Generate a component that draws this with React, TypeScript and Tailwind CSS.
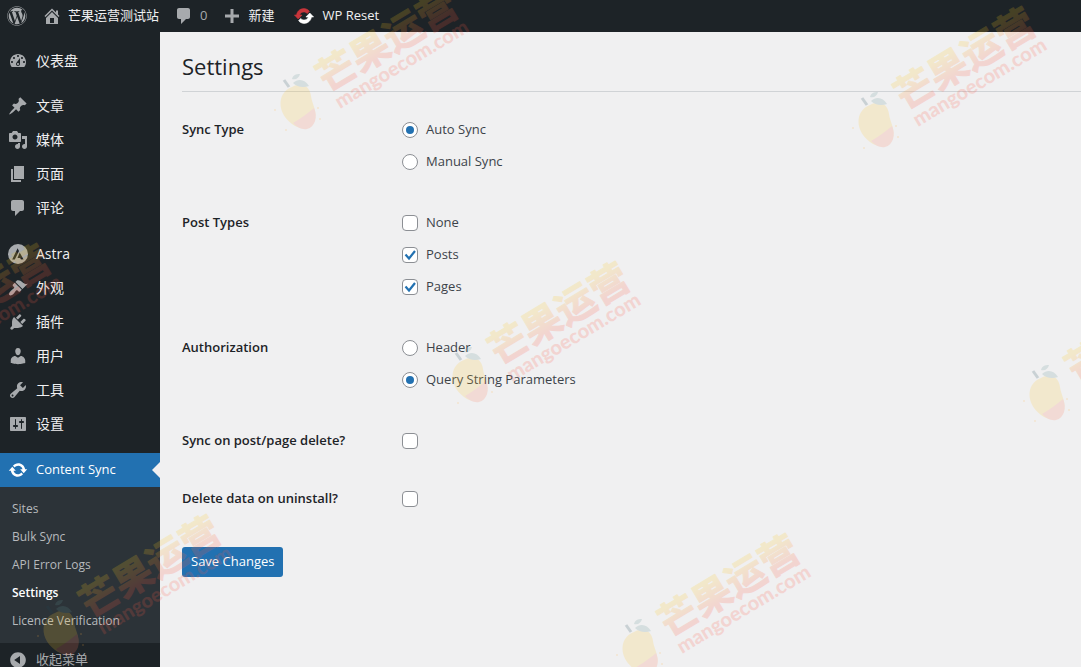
import { ReactNode } from 'react';
import { FaWordpress } from 'react-icons/fa';

const icons = {
  home: 'M16 8.5l1.53 1.53-1.06 1.06L10 4.6l-6.47 6.49-1.06-1.06L10 2.5l4 4v-2h2v4zm-6-2.46l6 5.99V18H4v-5.97zM12 17v-5H8v5h4z',
  plus: 'M17 8.5v3h-5.5V17h-3v-5.5H3v-3h5.5V3h3v5.5z',
  dashboard:
    'M3.76 16h12.48c1.1-1.37 1.76-3.11 1.76-5 0-4.42-3.58-8-8-8s-8 3.58-8 8c0 1.89.66 3.63 1.76 5zM10 4c.55 0 1 .45 1 1s-.45 1-1 1-1-.45-1-1 .45-1 1-1zM6 6c.55 0 1 .45 1 1s-.45 1-1 1-1-.45-1-1 .45-1 1-1zm8 0c.55 0 1 .45 1 1s-.45 1-1 1-1-.45-1-1 .45-1 1-1zm-5.37 5.55L12 7v6c0 1.1-.9 2-2 2s-2-.9-2-2c0-.57.24-1.08.63-1.45zM4 10c.55 0 1 .45 1 1s-.45 1-1 1-1-.45-1-1 .45-1 1-1zm12 0c.55 0 1 .45 1 1s-.45 1-1 1-1-.45-1-1 .45-1 1-1zm-5 3c0-.55-.45-1-1-1s-1 .45-1 1 .45 1 1 1 1-.45 1-1z',
  post: 'M10.44 3.02l1.82-1.82 6.36 6.35-1.83 1.82c-1.05-.68-2.48-.57-3.41.36l-.75.75c-.92.93-1.04 2.35-.35 3.41l-1.83 1.82-2.41-2.41-2.8 2.79c-.42.42-3.38 2.71-3.8 2.29s1.86-3.39 2.28-3.81l2.79-2.79L4.1 9.36l1.83-1.82c1.05.69 2.48.57 3.4-.36l.75-.75c.93-.92 1.05-2.35.36-3.41z',
  media:
    'M13 11V4c0-.55-.45-1-1-1h-1.67L9 1H5L3.67 3H2c-.55 0-1 .45-1 1v7c0 .55.45 1 1 1h10c.55 0 1-.45 1-1zM7 4.5c1.38 0 2.5 1.12 2.5 2.5S8.38 9.5 7 9.5 4.5 8.38 4.5 7 5.62 4.5 7 4.5zM14 6h5v10.5c0 1.38-1.12 2.5-2.5 2.5S14 17.88 14 16.5s1.12-2.5 2.5-2.5c.17 0 .34.02.5.05V9h-3V6zm-4 8.05V13h2v3.5c0 1.38-1.12 2.5-2.5 2.5S7 17.88 7 16.5 8.12 14 9.5 14c.17 0 .34.02.5.05z',
  page: 'M6 15V2h10v13H6zm-1 1h8v2H3V5h2v11z',
  comment: 'M5 2h9c1.1 0 2 .9 2 2v7c0 1.1-.9 2-2 2h-2l-5 5v-5H5c-1.1 0-2-.9-2-2V4c0-1.1.9-2 2-2z',
  appearance:
    'M14.48 11.06L7.41 3.99l1.5-1.5c.5-.56 2.3-.47 3.51.32 1.21.8 1.43 1.28 2.91 2.1 1.18.64 2.45 1.26 4.45.85zm-.71.71L6.7 4.7 4.93 6.47c-.39.39-.39 1.02 0 1.41l1.06 1.06c.39.39.39 1.03 0 1.42-.6.6-1.43 1.11-2.21 1.69-.35.26-.7.53-1.01.84C1.43 14.23.4 16.08 1.4 17.07c.99 1 2.84-.03 4.18-1.36.31-.31.58-.66.85-1.02.57-.78 1.08-1.61 1.69-2.21.39-.39 1.02-.39 1.41 0l1.06 1.06c.39.39 1.02.39 1.41 0z',
  plugins:
    'M13.11 4.36L9.87 7.6 8 5.73l3.24-3.24c.35-.34 1.05-.2 1.56.32.52.51.66 1.21.31 1.55zm-8 1.77l.91-1.12 9.01 9.01-1.19.84c-.71.71-2.63 1.16-3.82 1.16H6.14L4.9 17.26c-.59.59-1.54.59-2.12 0-.59-.58-.59-1.53 0-2.12l1.24-1.24v-3.88c0-1.13.4-3.19 1.09-3.89zm7.26 3.97l3.24-3.24c.34-.35 1.04-.21 1.55.31.52.51.66 1.21.31 1.55l-3.24 3.25z',
  users:
    'M10 9.25c-2.27 0-2.73-3.44-2.73-3.44C7 4.02 7.82 2 9.97 2c2.16 0 2.98 2.02 2.71 3.81 0 0-.41 3.44-2.68 3.44zm0 2.57L12.72 10c2.39 0 4.52 2.33 4.52 4.53v2.49s-3.65 1.13-7.24 1.13c-3.65 0-7.24-1.13-7.24-1.13v-2.49c0-2.25 1.94-4.48 4.47-4.48z',
  tools:
    'M16.68 9.77c-1.34 1.34-3.3 1.67-4.95.99l-5.41 6.52c-.99.99-2.59.99-3.58 0s-.99-2.59 0-3.57l6.52-5.42c-.68-1.65-.35-3.61.99-4.95 1.28-1.28 3.12-1.62 4.72-1.06l-2.89 2.89 2.82 2.82 2.86-2.87c.53 1.58.18 3.39-1.08 4.65zM3.81 16.21c.4.39 1.04.39 1.43 0 .4-.4.4-1.04 0-1.43-.39-.4-1.03-.4-1.43 0-.39.39-.39 1.03 0 1.43z',
  settings:
    'M18 16V4c0-.55-.45-1-1-1H3c-.55 0-1 .45-1 1v12c0 .55.45 1 1 1h14c.55 0 1-.45 1-1zM8 11h1c.55 0 1 .45 1 1s-.45 1-1 1H8v1.5c0 .28-.22.5-.5.5s-.5-.22-.5-.5V13H6c-.55 0-1-.45-1-1s.45-1 1-1h1V5.5c0-.28.22-.5.5-.5s.5.22.5.5V11zm5-2h-1c-.55 0-1-.45-1-1s.45-1 1-1h1V5.5c0-.28.22-.5.5-.5s.5.22.5.5V7h1c.55 0 1 .45 1 1s-.45 1-1 1h-1v5.5c0 .28-.22.5-.5.5s-.5-.22-.5-.5V9z',
  sync: 'M10.2 3.28c3.53 0 6.43 2.61 6.92 6h2.08l-3.5 4-3.5-4h2.32c-.45-1.97-2.21-3.45-4.32-3.45-1.45 0-2.73.71-3.54 1.78L4.95 5.66C6.23 4.2 8.11 3.28 10.2 3.28zm-.4 13.44c-3.52 0-6.43-2.61-6.92-6H.8l3.5-4c1.17 1.33 2.33 2.67 3.5 4H5.48c.45 1.97 2.21 3.45 4.32 3.45 1.45 0 2.73-.71 3.54-1.78l1.71 1.95c-1.28 1.46-3.15 2.38-5.25 2.38z',
  astra: 'M10 0a10 10 0 1 0 0 20 10 10 0 0 0 0-20zM9.6 4.2L11 7l-4.2 8.6H4.2zM11.7 8.5l3.9 7.1h-2.7l-.8-1.7H9.5z',
  collapse:
    'M10 2.16c4.33 0 7.84 3.51 7.84 7.84s-3.51 7.84-7.84 7.84S2.16 14.33 2.16 10 5.71 2.16 10 2.16zm2 11.72V6.12L6.18 9.97z',
};

type IconName = keyof typeof icons;

function Icon({ name }: { name: IconName }) {
  return (
    <svg viewBox="0 0 20 20" className="size-5 shrink-0" fill="currentColor" fillRule="evenodd" aria-hidden="true">
      <path d={icons[name]} />
    </svg>
  );
}

function ResetIcon() {
  return (
    <svg viewBox="0 0 20 20" className="size-5 shrink-0 -scale-x-100" strokeWidth="0.6" aria-hidden="true">
      <path
        fill="#c8353b"
        stroke="#c8353b"
        d="M10.2 2.6c3.8 0 6.8 2.9 7.2 6.4h2.2l-3.8 4-3.9-4h2.4c-.5-1.8-2.1-3-4.1-3-1.4 0-2.6.6-3.5 1.6L4.6 5.3C6 3.6 8 2.6 10.2 2.6z"
      />
      <path
        fill="#fff"
        stroke="#fff"
        d="M9.8 17.4c-3.8 0-6.8-2.9-7.2-6.4H.4l3.8-4 3.9 4H5.7c.5 1.8 2.1 3 4.1 3 1.4 0 2.6-.6 3.5-1.6l2.1 2.3c-1.4 1.7-3.4 2.7-5.6 2.7z"
      />
    </svg>
  );
}

const menuGroups: { icon: IconName; label: string }[][] = [
  [{ icon: 'dashboard', label: '仪表盘' }],
  [
    { icon: 'post', label: '文章' },
    { icon: 'media', label: '媒体' },
    { icon: 'page', label: '页面' },
    { icon: 'comment', label: '评论' },
  ],
  [
    { icon: 'astra', label: 'Astra' },
    { icon: 'appearance', label: '外观' },
    { icon: 'plugins', label: '插件' },
    { icon: 'users', label: '用户' },
    { icon: 'tools', label: '工具' },
    { icon: 'settings', label: '设置' },
  ],
];

const submenu = ['Sites', 'Bulk Sync', 'API Error Logs', 'Settings', 'Licence Verification'];

function AdminBar() {
  return (
    <header className="flex h-8 shrink-0 items-center bg-[#1d2327] text-[13px] text-[#f0f0f1]">
      <a href="#" aria-label="WordPress" className="pl-[7px] text-[#a7aaad]">
        <FaWordpress className="size-5" />
      </a>
      <a href="#" className="flex items-center gap-1.5 pl-[15px]">
        <span className="text-[#a7aaad]">
          <Icon name="home" />
        </span>
        芒果运营测试站
      </a>
      <a href="#" className="flex items-center gap-1.5 pl-[15px] text-[#a7aaad]">
        <Icon name="comment" />
        <span>0</span>
      </a>
      <a href="#" className="flex items-center gap-1.5 pl-[15px]">
        <span className="text-[#a7aaad]">
          <Icon name="plus" />
        </span>
        新建
      </a>
      <a href="#" className="flex items-center gap-2 pl-5">
        <ResetIcon />
        WP Reset
      </a>
    </header>
  );
}

function Sidebar() {
  return (
    <nav className="w-40 shrink-0 bg-[#1d2327] pt-3 text-[13px] text-[#f0f0f1]">
      {menuGroups.map((group, i) => (
        <ul key={i} className={i === 0 ? 'mb-[11px]' : 'mb-3'}>
          {group.map((item) => (
            <li key={item.label}>
              <a href="#" className="flex h-[34px] items-center gap-2 pl-2 text-sm">
                <span className="text-[#a7aaad]">
                  <Icon name={item.icon} />
                </span>
                {item.label}
              </a>
            </li>
          ))}
        </ul>
      ))}
      <a href="#" className="relative flex h-[34px] items-center gap-2 bg-[#2271b1] pl-2 text-white">
        <Icon name="sync" />
        Content Sync
        <span className="absolute right-0 border-8 border-transparent border-r-[#f0f0f1]" />
      </a>
      <ul className="bg-[#2c3338] py-2 text-xs text-[#b7babd]">
        {submenu.map((label) => (
          <li key={label}>
            <a
              href="#"
              className={
                label === 'Settings'
                  ? 'flex h-7 items-center pl-3 font-semibold text-white'
                  : 'flex h-7 items-center pl-3'
              }
            >
              {label}
            </a>
          </li>
        ))}
      </ul>
      <button className="flex h-[34px] items-center gap-2 pl-2 text-[#a7aaad]">
        <Icon name="collapse" />
        收起菜单
      </button>
    </nav>
  );
}

type OptionProps = { type: 'radio' | 'checkbox'; name: string; label?: string; id?: string; checked?: boolean };

function Option({ type, name, label, id, checked }: OptionProps) {
  return (
    <label className="flex h-8 items-center gap-2">
      <span className="relative flex size-4">
        <input
          type={type}
          name={name}
          id={id}
          defaultChecked={checked}
          className={
            type === 'radio'
              ? 'peer size-4 appearance-none rounded-full border border-[#8c8f94] bg-white'
              : 'peer size-4 appearance-none rounded border border-[#8c8f94] bg-white'
          }
        />
        {type === 'radio' ? (
          <span className="absolute inset-1 hidden rounded-full bg-[#2271b1] peer-checked:block" />
        ) : (
          <svg viewBox="0 0 16 16" className="pointer-events-none absolute inset-0 hidden peer-checked:block">
            <path d="M3.5 7.5l3.5 4L13 4" fill="none" stroke="#2271b1" strokeWidth="2.2" />
          </svg>
        )}
      </span>
      {label}
    </label>
  );
}

function Row({ title, htmlFor, children }: { title: string; htmlFor?: string; children: ReactNode }) {
  return (
    <tr className="align-top">
      <th scope="row" className="w-[220px] pt-5 text-left leading-[18px] font-semibold text-[#1d2327]">
        {htmlFor ? <label htmlFor={htmlFor}>{title}</label> : title}
      </th>
      <td className={htmlFor ? 'pt-3.5 pb-3' : 'pt-3.5 pb-[15px]'}>{children}</td>
    </tr>
  );
}

// mango origins of the repeated watermark
const marks = [
  [298, 105],
  [876, 123],
  [470, 378],
  [1047, 396],
  [640, 650],
  [61, 631],
  [-109, 360],
];

function Watermark() {
  return (
    <svg className="pointer-events-none absolute inset-0 h-full w-full" aria-hidden="true">
      <defs>
        <linearGradient id="mark" x1="0" y1="0" x2="0" y2="1">
          <stop offset="0.3" stopColor="#ffc820" />
          <stop offset="0.75" stopColor="#ff5a40" />
        </linearGradient>
      </defs>
      {marks.map(([x, y]) => (
        <g key={x} transform={`translate(${x} ${y})`} opacity="0.18">
          <path d="M-6-18C2-23 12-20 13-9c1 8 6 14 4 23-2 9-14 12-23 5-9-7-13-16-11-25 2-7 6-10 11-12z" fill="#ffc830" />
          <path d="M-5 18C5 12 14 5 16 3c4 9 1 19-7 21-5 1-10-2-14-6z" fill="#ff7a5a" />
          <path d="M-5-22c5-5 12-4 16 3-6 2-12 1-16-3zM-6-26c1-4 4-5 8-5-1 4-4 6-8 5z" fill="#5f9090" />
          <path d="M-14-25l5 7" stroke="#204858" strokeWidth="3" />
          <g fill="#ffb040">
            <circle cx="-23" cy="5" r="1" />
            <circle cx="-12" cy="25" r="1" />
            <circle cx="20" cy="3" r="1" />
            <circle cx="22" cy="14" r="1" />
          </g>
          <g transform="rotate(-31)">
            <text
              x="31"
              y="5"
              fontSize="39"
              fontWeight="700"
              fill="url(#mark)"
              stroke="url(#mark)"
              strokeLinejoin="round"
              className="font-['Noto_Sans_CJK_SC',sans-serif]"
            >
              芒果运营
            </text>
            <text
              x="34"
              y="25"
              fontSize="20"
              fontWeight="900"
              fill="#ff5a48"
              className="font-[Lato,sans-serif]"
            >
              mangoecom.com
            </text>
          </g>
        </g>
      ))}
    </svg>
  );
}

export default function App() {
  return (
    <div className="relative flex h-screen flex-col overflow-hidden bg-[#f0f0f1] font-['Open_Sans','Noto_Sans_CJK_SC',sans-serif] text-[13px] text-[#3c434a]">
      <AdminBar />
      <div className="flex min-h-0 flex-1">
        <Sidebar />
        <main className="flex-1 pt-5 pl-[22px]">
          <h1 className="h-10 border-b border-[#d0d3d6] text-[22px] leading-7 text-[#1d2327]">Settings</h1>
          <form className="pt-2">
            <table className="w-full">
              <tbody>
                <Row title="Sync Type">
                  <Option type="radio" name="sync_type" label="Auto Sync" checked />
                  <Option type="radio" name="sync_type" label="Manual Sync" />
                </Row>
                <Row title="Post Types">
                  <Option type="checkbox" name="none" label="None" />
                  <Option type="checkbox" name="posts" label="Posts" checked />
                  <Option type="checkbox" name="pages" label="Pages" checked />
                </Row>
                <Row title="Authorization">
                  <Option type="radio" name="auth" label="Header" />
                  <Option type="radio" name="auth" label="Query String Parameters" checked />
                </Row>
                <Row title="Sync on post/page delete?" htmlFor="sync-delete">
                  <Option type="checkbox" name="sync_delete" id="sync-delete" />
                </Row>
                <Row title="Delete data on uninstall?" htmlFor="delete-data">
                  <Option type="checkbox" name="delete_data" id="delete-data" />
                </Row>
              </tbody>
            </table>
            <button type="button" className="mt-5 h-[30px] rounded-[3px] bg-[#2271b1] px-[9px] text-white">
              Save Changes
            </button>
          </form>
        </main>
      </div>
      <Watermark />
    </div>
  );
}
